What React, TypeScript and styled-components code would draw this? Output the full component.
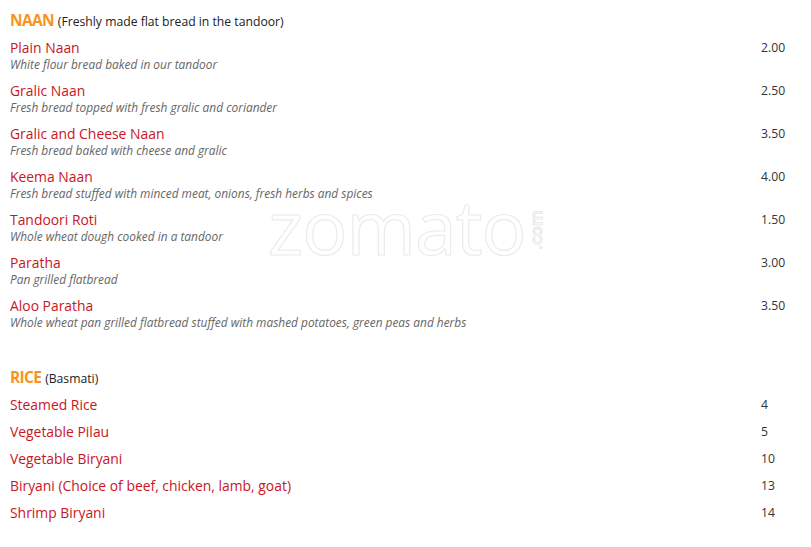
import React from "react";
import styled, { createGlobalStyle } from "styled-components";

const Global = createGlobalStyle`
  html, body { margin: 0; padding: 0; background: #fff; }
  body { font-family: "Open Sans", "Liberation Sans", sans-serif; }
`;

const Page = styled.div`
  position: relative;
  width: 811px;
  height: 547px;
  overflow: hidden;
  padding: 11px 0 0 10px;
  box-sizing: border-box;
`;

const Section = styled.section<{ $gap?: number }>`
  display: flex;
  flex-direction: column;
  margin-bottom: ${(p) => p.$gap ?? 0}px;
`;

const Heading = styled.div`
  display: flex;
  align-items: baseline;
  gap: 4px;
  height: 18px;
  line-height: 18px;
  margin-bottom: 10px;
`;

const HeadTitle = styled.span`
  font-size: 15.5px;
  font-weight: 700;
  color: #f7941e;
  letter-spacing: -0.7px;
`;

const HeadNote = styled.span`
  font-size: 12.2px;
  color: #222;
`;

const Row = styled.div`
  display: grid;
  grid-template-columns: 1fr 50px;
  margin-bottom: 10px;
`;

const Info = styled.div`
  display: flex;
  flex-direction: column;
`;

const Name = styled.div`
  font-size: 13.9px;
  line-height: 17px;
  color: #c8161e;
`;

const Desc = styled.div`
  font-size: 11.9px;
  line-height: 16px;
  font-style: italic;
  color: #666;
`;

const Price = styled.div`
  font-size: 12.2px;
  line-height: 17px;
  color: #333;
`;

const Watermark = styled.div`
  position: absolute;
  left: 268px;
  top: 184px;
  display: flex;
  align-items: center;
  pointer-events: none;
`;

const WmWord = styled.span`
  font-family: "Open Sans", sans-serif;
  font-weight: 400;
  font-size: 75px;
  line-height: 84px;
  letter-spacing: -0.9px;
  color: #fff;
  -webkit-text-stroke: 1.2px #ebebeb;
`;

const WmDomain = styled.span`
  font-family: "Open Sans", sans-serif;
  font-size: 17px;
  font-weight: 600;
  line-height: 14px;
  color: #fff;
  -webkit-text-stroke: 0.9px #e6e6e6;
  writing-mode: vertical-rl;
  transform: rotate(180deg);
  margin-left: 3px;
  margin-top: 8px;
`;

type Item = { name: string; desc?: string; price: string };

const naan: Item[] = [
  { name: "Plain Naan", desc: "White flour bread baked in our tandoor", price: "2.00" },
  { name: "Gralic Naan", desc: "Fresh bread topped with fresh gralic and coriander", price: "2.50" },
  { name: "Gralic and Cheese Naan", desc: "Fresh bread baked with cheese and gralic", price: "3.50" },
  { name: "Keema Naan", desc: "Fresh bread stuffed with minced meat, onions, fresh herbs and spices", price: "4.00" },
  { name: "Tandoori Roti", desc: "Whole wheat dough cooked in a tandoor", price: "1.50" },
  { name: "Paratha", desc: "Pan grilled flatbread", price: "3.00" },
  { name: "Aloo Paratha", desc: "Whole wheat pan grilled flatbread stuffed with mashed potatoes, green peas and herbs", price: "3.50" },
];

const rice: Item[] = [
  { name: "Steamed Rice", price: "4" },
  { name: "Vegetable Pilau", price: "5" },
  { name: "Vegetable Biryani", price: "10" },
  { name: "Biryani (Choice of beef, chicken, lamb, goat)", price: "13" },
  { name: "Shrimp Biryani", price: "14" },
];

const MenuRow = ({ item }: { item: Item }) => (
  <Row>
    <Info>
      <Name>{item.name}</Name>
      {item.desc && <Desc>{item.desc}</Desc>}
    </Info>
    <Price>{item.price}</Price>
  </Row>
);

export default function App() {
  return (
    <>
      <Global />
      <Page>
        <Section $gap={28}>
          <Heading>
            <HeadTitle>NAAN</HeadTitle>
            <HeadNote>(Freshly made flat bread in the tandoor)</HeadNote>
          </Heading>
          {naan.map((it) => (
            <MenuRow key={it.name} item={it} />
          ))}
        </Section>
        <Section>
          <Heading>
            <HeadTitle>RICE</HeadTitle>
            <HeadNote>(Basmati)</HeadNote>
          </Heading>
          {rice.map((it) => (
            <MenuRow key={it.name} item={it} />
          ))}
        </Section>
        <Watermark>
          <WmWord>zomato</WmWord>
          <WmDomain>.com</WmDomain>
        </Watermark>
      </Page>
    </>
  );
}
